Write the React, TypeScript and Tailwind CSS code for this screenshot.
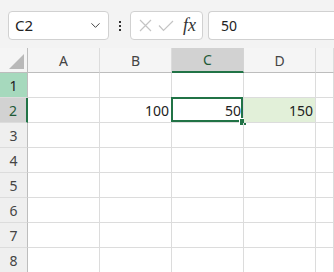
import { ChevronDown } from "lucide-react";

const cols = ["A", "B", "C", "D", ""];
const rows = [1, 2, 3, 4, 5, 6, 7, 8];
const values: Record<string, string> = { B2: "100", C2: "50", D2: "150" };

function Toolbar() {
  return (
    <div className="flex h-[48px] items-start bg-[#f3f3f3] pt-[11px] pl-[8px]">
      <div className="flex h-[29px] w-[101px] items-center justify-between rounded-[4px] border border-[#d1d1d1] bg-white pr-[5px] pl-[6px]">
        <span className="text-[15px] text-[#222]">C2</span>
        <ChevronDown className="size-[15px] text-[#444]" strokeWidth={1.6} />
      </div>
      <div className="flex h-[29px] w-[21px] flex-col items-center justify-center gap-[2px]">
        <span className="size-[2px] bg-[#333]" />
        <span className="size-[2px] bg-[#333]" />
        <span className="size-[2px] bg-[#333]" />
      </div>
      <div className="flex h-[29px] w-[73px] items-center rounded-[4px] border border-[#d1d1d1] bg-white pl-[8px]">
        <svg width="13" height="13" viewBox="0 0 13 13" fill="none" stroke="#c4c4c4" strokeWidth="1.2">
          <path d="M1 1 L12 12 M12 1 L1 12" />
        </svg>
        <svg className="ml-[6px]" width="16" height="12" viewBox="0 0 16 12" fill="none" stroke="#c4c4c4" strokeWidth="1.2">
          <path d="M1 5.5 L5.5 10.5 L15 1" />
        </svg>
        <span className="ml-[9px] font-['Liberation_Serif',serif] text-[18px] italic text-[#333]">
          fx
        </span>
      </div>
      <div className="ml-[5px] flex h-[29px] flex-1 items-center rounded-l-[4px] border border-r-0 border-[#d1d1d1] bg-white pl-[12px]">
        <span className="text-[14px] text-[#222]">50</span>
      </div>
    </div>
  );
}

function Corner() {
  return (
    <div className="relative h-[25px] border-r border-b border-[#bdbdbd] bg-[#f5f5f5]">
      <svg className="absolute right-[3px] bottom-[3px]" width="15" height="15" viewBox="0 0 15 15">
        <polygon points="15,0 15,15 0,15" fill="#b9b9b9" />
      </svg>
    </div>
  );
}

export default function App() {
  return (
    <div className="h-[272px] w-[334px] overflow-hidden bg-white font-['Noto_Sans',sans-serif]">
      <Toolbar />
      <div className="grid grid-cols-[28px_72px_72px_72px_72px_1fr] grid-rows-[repeat(9,25px)]">
        <Corner />
        {cols.map((c) => (
          <div
            key={c || "e"}
            className={
              c === "C"
                ? "flex items-center justify-center border-r border-b-2 border-r-[#d4d4d4] border-b-[#217346] bg-[#d2d2d2] text-[14px] text-[#1e5a37]"
                : "flex items-center justify-center border-r border-b border-r-[#dcdcdc] border-b-[#bdbdbd] bg-[#f5f5f5] text-[14px] text-[#444]"
            }
          >
            {c}
          </div>
        ))}
        {rows.map((r) => (
          <Row key={r} r={r} />
        ))}
      </div>
    </div>
  );
}

function Row({ r }: { r: number }) {
  const headerCls =
    r === 1
      ? "bg-[#a6d9bd] text-[#222] border-r border-r-[#bdbdbd]"
      : r === 2
        ? "bg-[#d2d2d2] text-[#1e5a37] border-r-2 border-r-[#217346]"
        : "bg-[#efefef] text-[#444] border-r border-r-[#bdbdbd]";
  return (
    <>
      <div
        className={`flex items-center justify-center border-b border-b-[#dcdcdc] text-[14px] ${headerCls}`}
      >
        {r}
      </div>
      {cols.map((c) => {
        const id = `${c}${r}`;
        const selected = id === "C2";
        const range = id === "D2";
        return (
          <div
            key={c ? id : `e${r}`}
            className={`relative flex items-center justify-end border-r border-b border-[#dcdcdc] pr-[2px] text-[14px] text-[#222] ${range ? "bg-[#e2f0d9]" : ""}`}
          >
            {c ? values[id] : null}
            {selected && (
              <>
                <div className="absolute -top-px -left-px right-0 bottom-0 border-2 border-[#217346]" />
                <div className="absolute -right-[4px] -bottom-[4px] box-content size-[6px] border border-white bg-[#217346]" />
              </>
            )}
          </div>
        );
      })}
    </>
  );
}
